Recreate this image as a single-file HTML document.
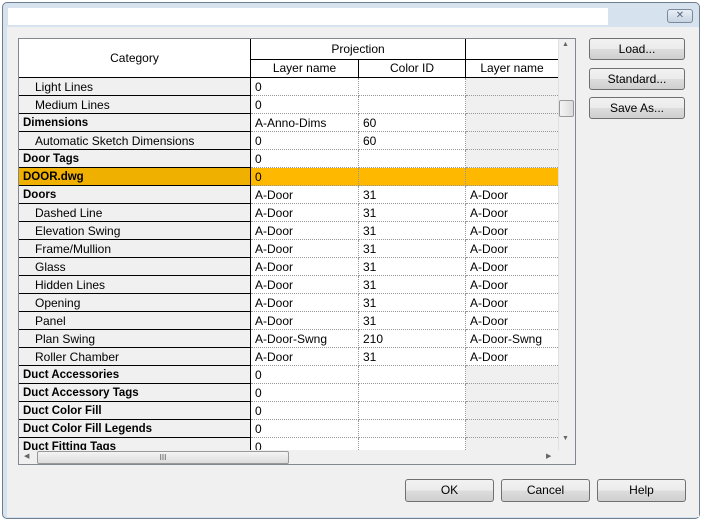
<!DOCTYPE html><html><head><style>
*{box-sizing:border-box;margin:0;padding:0}
body{width:702px;height:521px;background:#fff;font-family:"Liberation Sans",sans-serif;font-size:12px;color:#000;position:relative;overflow:hidden}
.abs{position:absolute}
.win{left:2px;top:2px;width:698px;height:517px;border:1px solid #6e7f92;border-radius:5px;background:#d6e2ee}
.client{left:7px;top:27px;width:692px;height:490px;background:#f0f0f0}
.title{left:8px;top:8px;width:600px;height:17px;background:#fff}
.close{left:667px;top:9px;width:26px;height:14px;border:1px solid #7a8a9c;border-radius:3px;background:linear-gradient(#e8eef5,#c8d4e2);font-size:10px;text-align:center;line-height:12px;color:#55667a}
.btn{position:absolute;border:1px solid #707070;border-radius:3px;background:linear-gradient(#f2f2f2 0%,#ebebeb 50%,#dddddd 51%,#cfcfcf 100%);text-align:center;line-height:20px;font-size:12px}
.grid{left:18px;top:38px;width:558px;height:427px;border:1px solid #828790;background:#f0f0f0;overflow:hidden}
.c{position:absolute;height:18px;line-height:18px;white-space:nowrap;overflow:hidden;padding-left:4px}
.cat{left:0;width:232px;background:#f0f0f0;border-bottom:1px solid #000;border-right:1px solid #000}
.b{font-weight:bold;font-size:11.5px}
.i{padding-left:16px}
.d{background:#fff;border-bottom:1px dotted #999;border-right:1px dotted #999}
.g{background:#f0f0f0;border-bottom:1px dotted #999}
.sel{background:#ffb800!important}
.selc{background:#f0b000!important}
.hd{position:absolute;background:#fff;text-align:center;border-right:1px solid #000;border-bottom:1px solid #000}
</style></head><body>
<div class="abs win"></div>
<div class="abs title"></div>
<div class="abs close">✕</div>
<div class="abs client"></div>
<div class="abs grid">
<div class="hd" style="left:0;top:0;width:232px;height:39px;line-height:38px">Category</div>
<div class="hd" style="left:232px;top:0;width:215px;height:21px;line-height:20px">Projection</div>
<div class="hd" style="left:447px;top:0;width:92px;height:21px;border-right:none"></div>
<div class="hd" style="left:232px;top:21px;width:108px;height:18px;line-height:17px">Layer name</div>
<div class="hd" style="left:340px;top:21px;width:107px;height:18px;line-height:17px">Color ID</div>
<div class="hd" style="left:447px;top:21px;width:92px;height:18px;line-height:17px;border-right:none">Layer name</div>
<div id="rows"></div>
<div class="abs" style="left:539px;top:0;width:17px;height:411px;background:#f0f0f0;border-left:1px solid #e0e0e0"></div>
<div class="abs" style="left:543px;top:2px;font-size:7px;color:#666">▲</div>
<div class="abs" style="left:543px;top:396px;font-size:7px;color:#666">▼</div>
<div class="abs" style="left:540px;top:61px;width:15px;height:17px;border:1px solid #999;border-radius:2px;background:linear-gradient(90deg,#f4f4f4,#dcdcdc)"></div>
<div class="abs" style="left:0;top:411px;width:539px;height:15px;background:#f0f0f0"></div>
<div class="abs" style="left:18px;top:412px;width:252px;height:13px;border:1px solid #999;border-radius:2px;background:linear-gradient(#f4f4f4,#dcdcdc);font-size:8px;text-align:center;line-height:11px;color:#555">III</div>
<div class="abs" style="left:5px;top:413px;font-size:7px;color:#666">◀</div>
<div class="abs" style="left:527px;top:413px;font-size:7px;color:#666">▶</div>
</div>
<div class="btn" style="left:589px;top:38px;width:96px;height:22px">Load...</div>
<div class="btn" style="left:589px;top:68px;width:96px;height:22px">Standard...</div>
<div class="btn" style="left:589px;top:97px;width:96px;height:22px">Save As...</div>
<div class="btn" style="left:405px;top:479px;width:89px;height:23px">OK</div>
<div class="btn" style="left:501px;top:479px;width:89px;height:23px">Cancel</div>
<div class="btn" style="left:597px;top:479px;width:89px;height:23px">Help</div>
<script>
var R=[["Light Lines",0,"0","",""],["Medium Lines",0,"0","",""],["Dimensions",1,"A-Anno-Dims","60",""],["Automatic Sketch Dimensions",0,"0","60",""],["Door Tags",1,"0","",""],["DOOR.dwg",2,"0","",""],["Doors",1,"A-Door","31","A-Door"],["Dashed Line",0,"A-Door","31","A-Door"],["Elevation Swing",0,"A-Door","31","A-Door"],["Frame/Mullion",0,"A-Door","31","A-Door"],["Glass",0,"A-Door","31","A-Door"],["Hidden Lines",0,"A-Door","31","A-Door"],["Opening",0,"A-Door","31","A-Door"],["Panel",0,"A-Door","31","A-Door"],["Plan Swing",0,"A-Door-Swng","210","A-Door-Swng"],["Roller Chamber",0,"A-Door","31","A-Door"],["Duct Accessories",1,"0","",""],["Duct Accessory Tags",1,"0","",""],["Duct Color Fill",1,"0","",""],["Duct Color Fill Legends",1,"0","",""],["Duct Fitting Tags",1,"0","",""]];
var h="";R.forEach(function(r,k){var t=39+k*18;var s=r[1]==2;
h+='<div class="c cat '+(r[1]?'b':'i')+(s?' selc':'')+'" style="top:'+t+'px">'+r[0]+'</div>';
h+='<div class="c d'+(s?' sel':'')+'" style="top:'+t+'px;left:232px;width:108px">'+r[2]+'</div>';
h+='<div class="c d'+(s?' sel':'')+'" style="top:'+t+'px;left:340px;width:107px">'+r[3]+'</div>';
h+='<div class="c '+(r[4]?'d':'g')+(s?' sel':'')+'" style="top:'+t+'px;left:447px;width:92px;border-right:none">'+r[4]+'</div>';});
document.getElementById("rows").innerHTML=h;
</script>
</body></html>
